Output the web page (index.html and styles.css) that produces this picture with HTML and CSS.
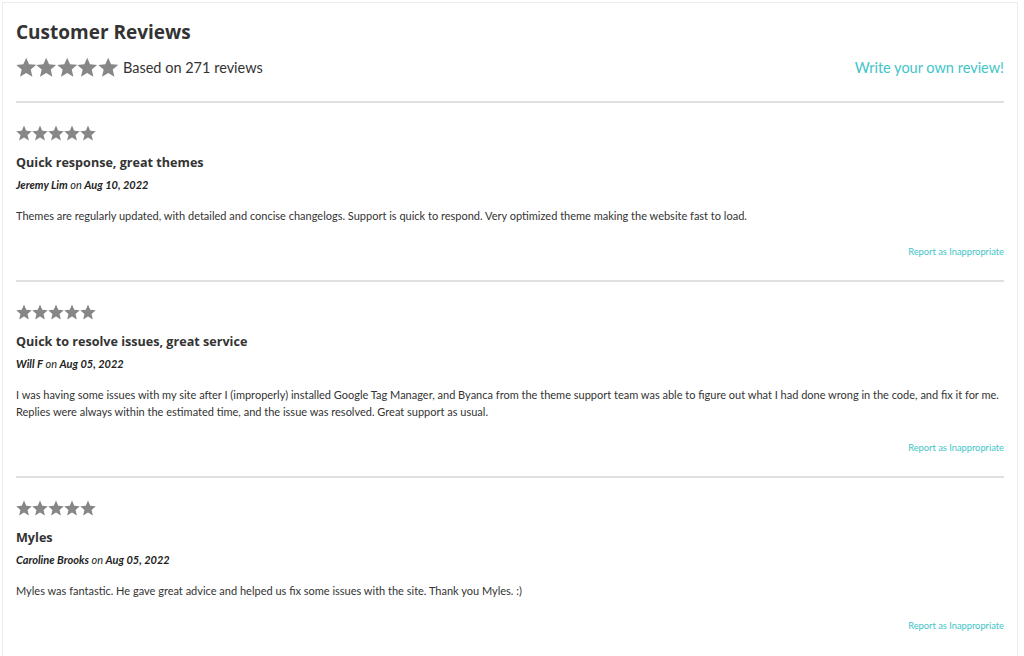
FILE: index.html
```html
<!DOCTYPE html>
<html lang="en">
<head>
    <meta charset="UTF-8">
    <title>Customer Reviews</title>
    <link rel="stylesheet" href="styles.css">
</head>
<body>
    <svg width="0" height="0" class="defs">
        <symbol id="star" viewBox="1 1.2 22 21.2">
            <path d="M12 1.5l3.1 7.1 7.6.7-5.8 5.1 1.8 7.6L12 18l-6.7 4 1.8-7.6-5.8-5.1 7.6-.7z"/>
        </symbol>
    </svg>
    <div class="reviews">
        <div class="reviews-header">
            <h2>Customer Reviews</h2>
            <div class="summary">
                <span class="stars stars-lg">
                    <svg><use href="#star"/></svg><svg><use href="#star"/></svg><svg><use href="#star"/></svg><svg><use href="#star"/></svg><svg><use href="#star"/></svg>
                </span>
                <span class="summary-text">Based on 271 reviews</span>
                <a href="#" class="write-link">Write your own review!</a>
            </div>
        </div>

        <div class="review">
            <div class="stars">
                <svg><use href="#star"/></svg><svg><use href="#star"/></svg><svg><use href="#star"/></svg><svg><use href="#star"/></svg><svg><use href="#star"/></svg>
            </div>
            <h3>Quick response, great themes</h3>
            <div class="byline"><strong>Jeremy Lim</strong> on <strong>Aug 10, 2022</strong></div>
            <p class="body">Themes are regularly updated, with detailed and concise changelogs. Support is quick to respond. Very optimized theme making the website fast to load.</p>
            <div class="report"><a href="#">Report as Inappropriate</a></div>
        </div>

        <div class="review">
            <div class="stars">
                <svg><use href="#star"/></svg><svg><use href="#star"/></svg><svg><use href="#star"/></svg><svg><use href="#star"/></svg><svg><use href="#star"/></svg>
            </div>
            <h3>Quick to resolve issues, great service</h3>
            <div class="byline"><strong>Will F</strong> on <strong>Aug 05, 2022</strong></div>
            <p class="body">I was having some issues with my site after I (improperly) installed Google Tag Manager, and Byanca from the theme support team was able to figure out what I had done wrong in the code, and fix it for me. Replies were always within the estimated time, and the issue was resolved. Great support as usual.</p>
            <div class="report"><a href="#">Report as Inappropriate</a></div>
        </div>

        <div class="review">
            <div class="stars">
                <svg><use href="#star"/></svg><svg><use href="#star"/></svg><svg><use href="#star"/></svg><svg><use href="#star"/></svg><svg><use href="#star"/></svg>
            </div>
            <h3>Myles</h3>
            <div class="byline"><strong>Caroline Brooks</strong> on <strong>Aug 05, 2022</strong></div>
            <p class="body">Myles was fantastic. He gave great advice and helped us fix some issues with the site. Thank you Myles. :)</p>
            <div class="report"><a href="#">Report as Inappropriate</a></div>
        </div>
    </div>
</body>
</html>
```

FILE: styles.css
```css
body {
    margin: 2px 0 0 2px;
    background: #fff;
    font-family: Lato, 'Liberation Sans', sans-serif;
    color: #333;
    overflow: hidden;
}

.defs {
    position: absolute;
}

.reviews {
    width: 988px;
    height: 700px;
    padding: 0 13px;
    border: 1px solid #ececec;
    border-bottom: none;
}

.reviews-header {
    padding-top: 16px;
    padding-bottom: 24px;
}

h2 {
    margin: 0;
    font-family: 'Open Sans', Lato, sans-serif;
    font-size: 19px;
    font-weight: 700;
    line-height: 26px;
    color: #333;
}

.summary {
    display: flex;
    align-items: center;
    margin-top: 12px;
}

.stars {
    display: flex;
    color: #878787;
}

.stars svg {
    width: 16px;
    height: 16px;
    fill: currentColor;
}

.stars-lg svg {
    width: 20.4px;
    height: 20.4px;
}

.summary-text {
    margin-left: 5px;
    font-size: 14.5px;
    color: #333;
}

.write-link {
    margin-left: auto;
    font-size: 14.5px;
    color: #3fc5c8;
    text-decoration: none;
}

.review {
    border-top: 2px solid #e0e0e0;
    padding: 22px 0 20px;
}

h3 {
    margin: 13px 0 0;
    font-family: 'Open Sans', Lato, sans-serif;
    font-size: 12.6px;
    font-weight: 700;
    line-height: 18px;
    color: #333;
}

.byline {
    margin-top: 5px;
    font-size: 11px;
    line-height: 16px;
    font-style: italic;
    color: #222;
}

.byline strong {
    font-weight: 700;
}

.body {
    margin: 14px 0 0;
    font-size: 11px;
    line-height: 17.5px;
    color: #333;
}

.report {
    margin-top: 19px;
    text-align: right;
    font-size: 9.3px;
    line-height: 16px;
}

.report a {
    color: #3fc5c8;
    text-decoration: none;
}
```
